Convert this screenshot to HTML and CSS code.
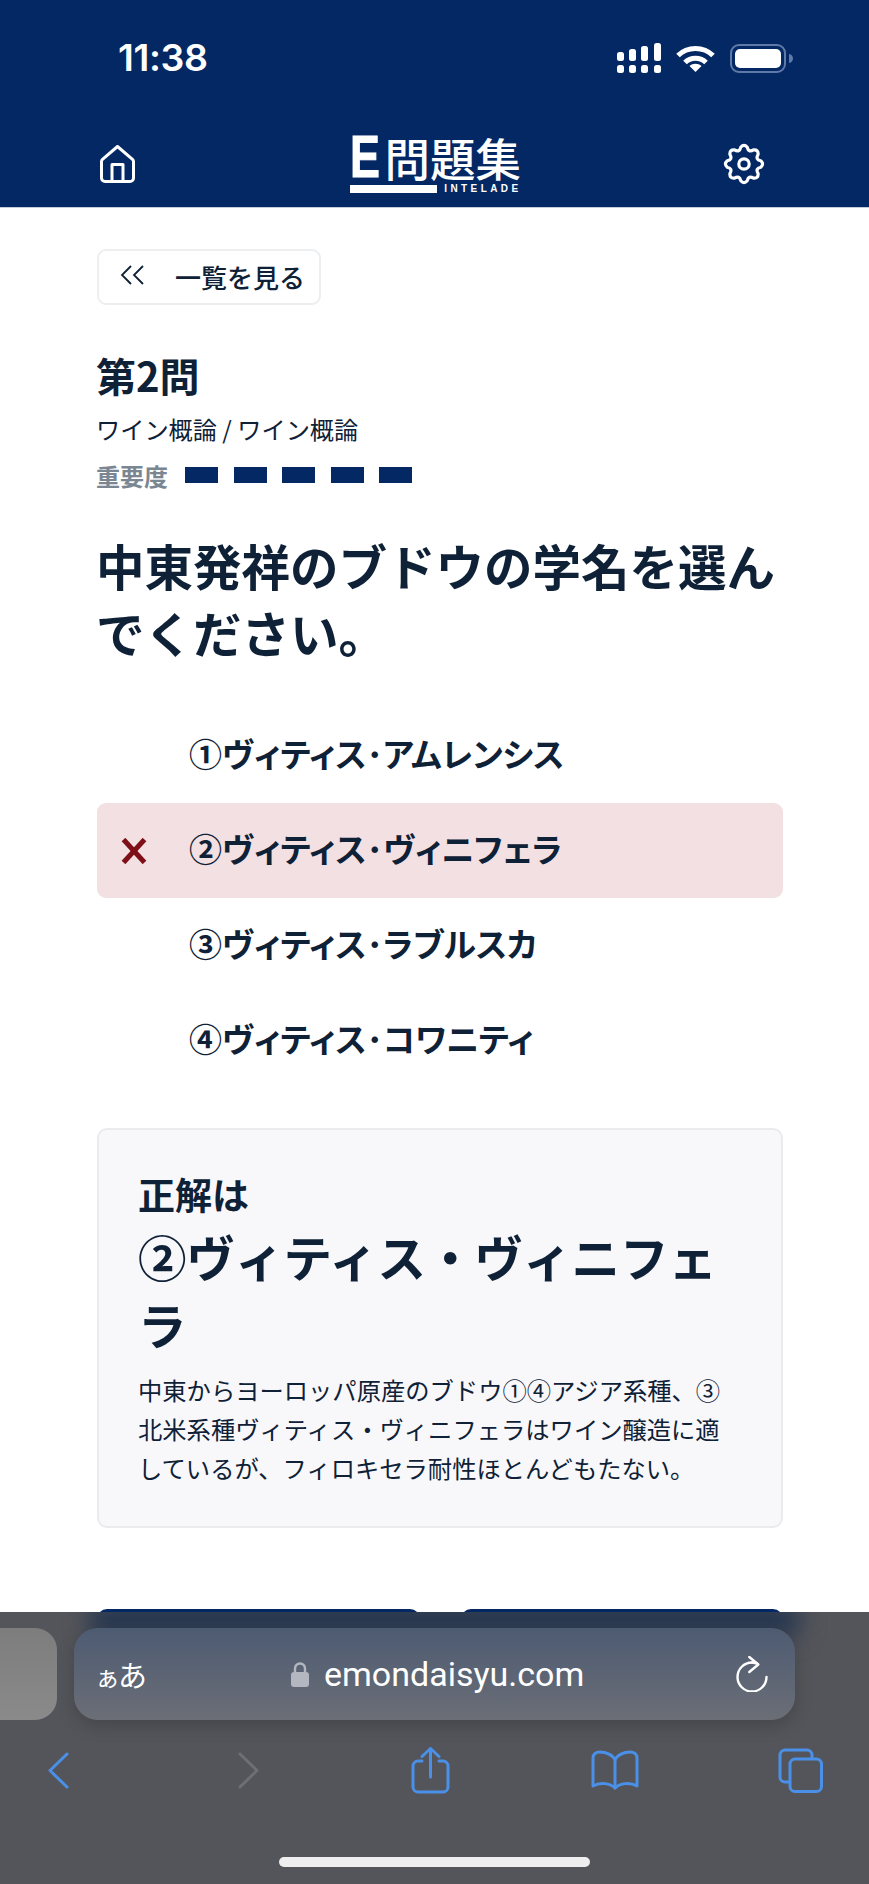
FILE: index.html
```html
<!DOCTYPE html>
<html lang="ja">
<head>
<meta charset="utf-8">
<title>E問題集</title>
<link rel="stylesheet" href="styles.css">
</head>
<body>
<div class="screen">
  <header class="app-header">
    <div class="status-bar">
      <span class="clock">11:38</span>
      <div class="status-icons">
        <svg class="ic-signal" viewBox="0 0 44 30" fill="#fff"><rect x="0" y="9" width="7" height="9" rx="2.5"/><rect x="12" y="6" width="7" height="12" rx="2.5"/><rect x="24" y="3" width="7" height="15" rx="2.5"/><rect x="37" y="0" width="7" height="18" rx="2.5"/><rect x="0" y="22" width="7" height="8" rx="2.5"/><rect x="12" y="22" width="7" height="8" rx="2.5"/><rect x="24" y="22" width="7" height="8" rx="2.5"/><rect x="37" y="22" width="7" height="8" rx="2.5"/></svg>
        <svg class="ic-wifi" viewBox="0 0 39 27" fill="none" stroke="#fff" stroke-width="5"><path d="M2 10.5C11.500 1 27.500 1 37 10.500"/><path d="M9 17.500C14.500 11.800 24.500 11.800 30 17.500"/><path d="M19.500 27l-6-6c3.300-3 8.700-3 12 0z" fill="#fff" stroke="none"/></svg>
        <svg class="ic-battery" viewBox="0 0 63 29"><rect x="1" y="1" width="54" height="27" rx="8" fill="none" stroke="#5f7aa8" stroke-width="2"/><rect x="5" y="5" width="46" height="19" rx="5" fill="#fff"/><path d="M59 10c2.500.5 4 2.300 4 4.500s-1.500 4-4 4.500z" fill="#5f7aa8"/></svg>
      </div>
    </div>
    <nav class="app-nav">
      <svg class="ic-home" viewBox="0 0 36 38" fill="none" stroke="#fff" stroke-width="3" stroke-linejoin="round"><path d="M1.500 16.500a3 3 0 0 1 1-2.200L17.500 1.500l15 12.800a3 3 0 0 1 1 2.200V33a3.500 3.500 0 0 1-3.500 3.500H5A3.500 3.500 0 0 1 1.500 33z"/><path d="M12 36.500V19.500h11v17"/></svg>
      <div class="logo">
        <div class="logo-top"><span class="logo-e">E</span><span class="logo-name">問題集</span></div>
        <div class="logo-bottom"><span class="logo-bar"></span><span class="logo-sub">INTELADE</span></div>
      </div>
      <svg class="ic-gear" viewBox="-1 -1 42 42" fill="none" stroke="#fff" stroke-width="3.200" stroke-linejoin="round"><path d="M16.760 3.310Q20 -.5 23.240 3.310Q24.590 8.910 29.510 5.910Q34.500 5.500 34.090 10.490Q31.090 15.410 36.690 16.760Q40.500 20 36.690 23.240Q31.090 24.590 34.090 29.510Q34.500 34.500 29.510 34.090Q24.590 31.090 23.240 36.690Q20 40.500 16.760 36.690Q15.410 31.090 10.490 34.090Q5.500 34.500 5.910 29.510Q8.910 24.590 3.310 23.240Q-.5 20 3.310 16.760Q8.910 15.410 5.910 10.490Q5.500 5.500 10.490 5.910Q15.410 8.910 16.760 3.310z"/><circle cx="20" cy="20" r="5.200"/></svg>
    </nav>
  </header>

  <main class="content">
    <a class="back-btn"><svg class="ic-dbl" viewBox="0 0 24 20" fill="none" stroke="#0f2136" stroke-width="1.800"><path d="M11 1L2 10l9 9"/><path d="M23 1l-9 9 9 9"/></svg><span>一覧を見る</span></a>

    <h2 class="q-no">第2問</h2>
    <p class="q-cat">ワイン概論 / ワイン概論</p>
    <div class="q-rank">
      <span class="rank-label">重要度</span>
      <div class="rank-marks"><i></i><i></i><i></i><i></i><i></i></div>
    </div>

    <h1 class="q-text">中東発祥のブドウの学名を選んでください。</h1>

    <ul class="options">
      <li class="option"><span class="mark"></span><span>①ヴィティス･アムレンシス</span></li>
      <li class="option wrong"><span class="mark"><svg class="ic-x" viewBox="0 0 26 26" fill="none" stroke="#7f0f16" stroke-width="5"><path d="M2.500 1.500l21 23"/><path d="M23.500 1.500l-21 23"/></svg></span><span>②ヴィティス･ヴィニフェラ</span></li>
      <li class="option"><span class="mark"></span><span>③ヴィティス･ラブルスカ</span></li>
      <li class="option"><span class="mark"></span><span>④ヴィティス･コワニティ</span></li>
    </ul>

    <section class="answer">
      <h3 class="ans-label">正解は</h3>
      <h2 class="ans-title">②ヴィティス・ヴィニフェラ</h2>
      <p class="ans-body">中東からヨーロッパ原産のブドウ①④アジア系種、③北米系種ヴィティス・ヴィニフェラはワイン醸造に適しているが、フィロキセラ耐性ほとんどもたない。</p>
    </section>

    <div class="pager"><a class="pager-btn"></a><a class="pager-btn"></a></div>
  </main>

  <div class="safari">
    <div class="tab-peek"></div>
    <div class="url-bar">
      <span class="aa"><small>ぁ</small>あ</span>
      <svg class="ic-lock" viewBox="0 0 18 25"><path d="M4 11V6.500a5 5 0 0 1 10 0V11" fill="none" stroke="#b4b6c0" stroke-width="2.400"/><rect x="0" y="10" width="18" height="15" rx="3" fill="#b4b6c0"/></svg>
      <span class="url">emondaisyu.com</span>
      <svg class="ic-reload" viewBox="0 0 32 36" fill="none" stroke="#fff" stroke-width="2.400" stroke-linecap="round" stroke-linejoin="round"><path d="M16 6.500A14.500 14.500 0 1 0 30.500 21"/><path d="M13.300 1l9 7.500-9 7.500"/><path d="M16 6.500l5 1"/></svg>
    </div>
    <div class="tools">
      <svg class="t-chev" viewBox="0 0 21 37" fill="none" stroke="#4a90e8" stroke-width="3" stroke-linecap="round" stroke-linejoin="round"><path d="M19 2L2 18.500 19 35"/></svg>
      <svg class="t-chev t-fwd" viewBox="0 0 21 37" fill="none" stroke="#6e6f72" stroke-width="3" stroke-linecap="round" stroke-linejoin="round"><path d="M2 2l17 16.500L2 35"/></svg>
      <svg class="t-share" viewBox="0 0 39 47" fill="none" stroke="#4a90e8" stroke-width="3" stroke-linecap="round" stroke-linejoin="round"><path d="M11 14H7a5 5 0 0 0-5 5v21a5 5 0 0 0 5 5h25a5 5 0 0 0 5-5V19a5 5 0 0 0-5-5h-4"/><path d="M19.500 30V2"/><path d="M11 9.500l8.500-8 8.500 8"/></svg>
      <svg class="t-book" viewBox="0 0 48 40" fill="none" stroke="#4a90e8" stroke-width="3" stroke-linecap="round" stroke-linejoin="round"><path d="M24 10C22 5 15 2 9 2 5 2 2 4 2 8v28c7-4 17-3 22 2 5-5 15-6 22-2V8c0-4-3-6-7-6-6 0-13 3-15 8z"/><path d="M24 10v28"/></svg>
      <svg class="t-tabs" viewBox="0 0 45 45" fill="none" stroke="#4a90e8" stroke-width="3" stroke-linejoin="round"><path d="M34 10V7a5 5 0 0 0-5-5H7a5 5 0 0 0-5 5v22a5 5 0 0 0 5 5h4"/><rect x="12" y="11" width="31.500" height="32.500" rx="5"/></svg>
    </div>
    <div class="home-bar"></div>
  </div>
</div>
</body>
</html>
```
FILE: styles.css
```css
* { box-sizing: border-box; }
html, body { margin: 0; padding: 0; }
body {
  width: 869px;
  height: 1884px;
  overflow: hidden;
  background: #fff;
  color: #0f2136;
  font-family: "Noto Sans CJK JP", "Noto Sans", sans-serif;
}
.screen { position: relative; width: 869px; height: 1884px; overflow: hidden; }
h1, h2, h3, p, ul { margin: 0; padding: 0; }

/* header */
.app-header { background: #042863; height: 208px; color: #fff; border-bottom: 1px solid #c4cbd8; }
.status-bar { display: flex; justify-content: space-between; align-items: center; padding: 43px 76px 0 118px; height: 73px; }
.clock { font-family: "Inter", sans-serif; font-size: 37.500px; font-weight: 600; line-height: 30px; letter-spacing: -.4px; }
.status-icons { display: flex; align-items: center; gap: 15px; }
.ic-signal { width: 44px; height: 30px; }
.ic-wifi { width: 39px; height: 27px; }
.ic-battery { width: 63px; height: 29px; }
.app-nav { display: flex; justify-content: space-between; align-items: center; padding: 48px 104px 0 100px; height: 134px; }
.ic-home { width: 36px; height: 38px; }
.ic-gear { width: 42px; height: 42px; }
.logo { display: flex; flex-direction: column; width: 172px; margin-left: 12px; }
.logo-top { display: flex; align-items: center; height: 44px; gap: 8px; }
.logo-e { display: inline-block; width: 27px; font-family: "Liberation Sans", sans-serif; font-weight: 700; font-size: 59px; line-height: 44px; transform: scaleX(.76); transform-origin: left center; -webkit-text-stroke: 1px #fff; }
.logo-name { font-size: 45.500px; line-height: 44px; font-weight: 500; letter-spacing: 0; }
.logo-bottom { display: flex; align-items: center; gap: 7px; margin-top: 6px; height: 8px; }
.logo-bar { width: 89px; height: 8px; background: #fff; }
.logo-sub { font-family: "Liberation Sans", sans-serif; font-size: 10px; font-weight: 700; letter-spacing: 3.400px; line-height: 8px; white-space: nowrap; }

/* content */
.content { padding: 41px 86px 0 97px; }
.back-btn { display: inline-flex; align-items: center; width: 224px; height: 56px; border: 2px solid #eceef0; border-radius: 9px; padding-left: 21px; font-size: 26px; font-weight: 500; line-height: 1; }
.ic-dbl { width: 24px; height: 20px; margin-right: 31px; margin-top: -4px; }
.q-no { font-size: 40px; line-height: 56px; font-weight: 700; margin-top: 42px; margin-left: -1px; }
.q-cat { font-size: 24.200px; line-height: 36px; margin-top: 8px; font-weight: 400; margin-left: -1px; }
.q-rank { display: flex; align-items: center; margin-top: 10px; height: 36px; margin-left: -1px; }
.rank-label { font-size: 24px; font-weight: 700; color: #7a8691; width: 89px; }
.rank-marks { display: flex; gap: 15.500px; }
.rank-marks i { display: block; width: 33px; height: 16px; background: #042863; }
.q-text { font-size: 48.500px; line-height: 67px; font-weight: 700; margin-top: 39px; margin-left: -1px; }

.options { list-style: none; margin-top: 42px; }
.option { display: flex; align-items: center; height: 95px; padding-bottom: 6px; border-radius: 9px; font-size: 33px; font-weight: 700; font-feature-settings: "palt"; }
.option.wrong { background: #f3e0e2; }
.mark { display: flex; align-items: center; justify-content: center; width: 92px; padding-right: 18px; padding-top: 6px; flex: none; }
.ic-x { width: 26px; height: 26px; }

.answer { margin-top: 40px; height: 400px; background: #f8f8fb; border: 2px solid #ebebee; border-radius: 10px; padding: 38px 40px 0 39px; }
.ans-label { font-size: 37px; line-height: 52px; font-weight: 700; }
.ans-title { font-size: 48.500px; line-height: 68px; font-weight: 700; margin-top: 2px; }
.ans-body { font-size: 24.300px; line-height: 39px; margin-top: 12px; font-weight: 400; }

.pager { display: flex; gap: 41px; margin-top: 81px; }
.pager-btn { display: block; flex: 1; height: 60px; border-radius: 10px; background: #042863; }

/* browser chrome overlay */
.safari { position: absolute; left: 0; right: 0; top: 1612px; height: 272px; overflow: hidden; background: #54555a; }
.safari::before { content: ""; position: absolute; left: 90px; right: 70px; top: -10px; height: 34px; background: #24354f; filter: blur(12px); }
.tab-peek { position: absolute; left: -30px; top: 16px; width: 87px; height: 92px; border-radius: 22px; background: linear-gradient(#7d7d7d, #8a8a8a); }
.url-bar { position: absolute; left: 74px; top: 16px; width: 721px; height: 92px; border-radius: 24px; background: linear-gradient(#4d5b72, #6b6e76); box-shadow: 0 6px 18px rgba(0,0,0,.18); color: #fff; display: flex; align-items: center; padding: 0 27px 0 21px; }
.aa { font-size: 29px; line-height: 1; width: 54px; flex: none; white-space: nowrap; letter-spacing: -1px; }
.aa small { font-size: 25px; letter-spacing: -2px; }
.ic-lock { width: 18px; height: 25px; flex: none; margin-left: 142px; }
.url { font-family: "Roboto", sans-serif; font-size: 34px; line-height: 1; margin-left: 15px; white-space: nowrap; }
.ic-reload { width: 32px; height: 36px; flex: none; margin-left: auto; }
.tools { position: absolute; left: 48px; right: 46px; top: 134px; height: 48px; display: flex; align-items: center; }
.t-chev { width: 21px; height: 37px; }
.t-fwd { margin-left: 169px; }
.t-share { width: 39px; height: 47px; margin-left: 152px; }
.t-book { width: 48px; height: 40px; margin-left: 141px; }
.t-tabs { width: 45px; height: 45px; margin-left: 139px; }
.home-bar { position: absolute; left: 279px; top: 245px; width: 311px; height: 10px; border-radius: 5px; background: #eeeeef; }
```
